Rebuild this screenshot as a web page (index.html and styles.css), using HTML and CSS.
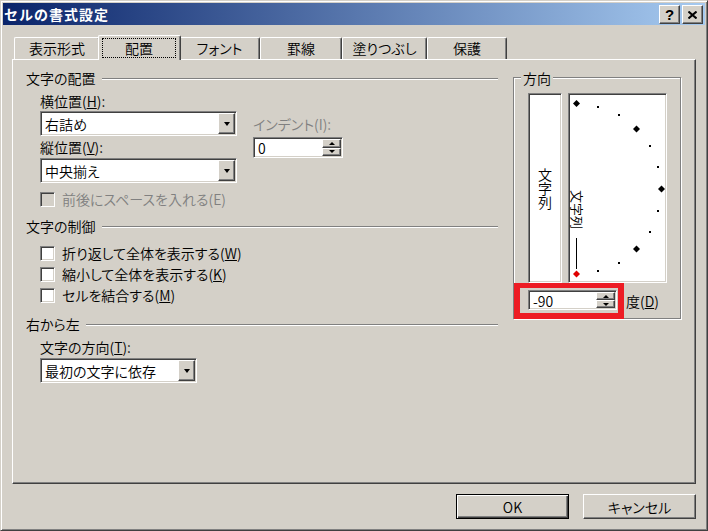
FILE: index.html
```html
<!DOCTYPE html>
<html lang="ja">
<head>
    <meta charset="UTF-8">
    <title>セルの書式設定</title>
    <link rel="stylesheet" href="styles.css">
</head>
<body>

<div class="window">
    <div class="titlebar">
        <span class="title">セルの書式設定</span>
        <span class="cap-btn">?</span>
        <span class="cap-btn">
            <svg width="9" height="8" viewBox="0 0 9 8"><path d="M0.5 0.5L8.5 7.5M8.5 0.5L0.5 7.5" stroke="#000" stroke-width="2"/></svg>
        </span>
    </div>

    <div class="tabs">
        <div class="tab tab-format">表示形式</div>
        <div class="tab active"><span class="focus">配置</span></div>
        <div class="tab tab-font">フォント</div>
        <div class="tab tab-border">罫線</div>
        <div class="tab tab-fill">塗りつぶし</div>
        <div class="tab tab-protect">保護</div>
    </div>

    <div class="panel">
        <div class="left-col">
            <!-- 文字の配置 -->
            <div class="group-head head-align"><span>文字の配置</span><i class="etch"></i></div>
            <div class="align-row">
                <div class="align-col">
                    <div class="label label-h">横位置(<u>H</u>):</div>
                    <div class="combo combo-h">
                        <span class="combo-text">右詰め</span>
                        <span class="drop-btn"><i class="arrow-down"></i></span>
                    </div>
                    <div class="label label-v">縦位置(<u>V</u>):</div>
                    <div class="combo combo-v">
                        <span class="combo-text">中央揃え</span>
                        <span class="drop-btn"><i class="arrow-down"></i></span>
                    </div>
                </div>
                <div class="indent-col">
                    <div class="label disabled">インデント(I):</div>
                    <div class="spin spin-indent">
                        <span class="spin-text">0</span>
                        <span class="spin-btns">
                            <span class="spin-btn"><i class="arrow-up"></i></span>
                            <span class="spin-btn"><i class="arrow-down"></i></span>
                        </span>
                    </div>
                </div>
            </div>
            <div class="check disabled check-space"><span class="box"></span>前後にスペースを入れる(E)</div>

            <!-- 文字の制御 -->
            <div class="group-head head-control"><span>文字の制御</span><i class="etch"></i></div>
            <div class="check check-first"><span class="box"></span>折り返して全体を表示する(<u>W</u>)</div>
            <div class="check check-next"><span class="box"></span>縮小して全体を表示する(<u>K</u>)</div>
            <div class="check check-next"><span class="box"></span>セルを結合する(<u>M</u>)</div>

            <!-- 右から左 -->
            <div class="group-head head-rtl"><span>右から左</span><i class="etch"></i></div>
            <div class="label label-dir">文字の方向(<u>T</u>):</div>
            <div class="combo combo-dir">
                <span class="combo-text">最初の文字に依存</span>
                <span class="drop-btn"><i class="arrow-down"></i></span>
            </div>
        </div>

        <!-- 方向 -->
        <div class="orient">
            <div class="orient-title">方向</div>
            <div class="orient-boxes">
                <div class="text-box"><span>文字列</span></div>
                <div class="dial">
                    <svg width="97" height="188" viewBox="0 0 97 188">
                        <text x="96" y="-3" transform="rotate(90)" font-size="13">文字列</text>
                        <line x1="7.5" y1="144" x2="7.5" y2="175" stroke="#000" stroke-width="1"/>
                        <polygon points="7.5,6 11,9.5 7.5,13 4,9.5" fill="#000"/>
                        <polygon points="67.5,31.5 71,35 67.5,38.5 64,35" fill="#000"/>
                        <polygon points="92.5,91.5 96,95 92.5,98.5 89,95" fill="#000"/>
                        <polygon points="67.5,151.5 71,155 67.5,158.5 64,155" fill="#000"/>
                        <polygon points="7.5,176.5 11,180 7.5,183.5 4,180" fill="#e00000"/>
                        <rect x="28" y="12" width="2" height="2"/>
                        <rect x="49" y="20" width="2" height="2"/>
                        <rect x="80" y="51" width="2" height="2"/>
                        <rect x="88" y="72" width="2" height="2"/>
                        <rect x="88" y="116" width="2" height="2"/>
                        <rect x="80" y="137" width="2" height="2"/>
                        <rect x="49" y="168" width="2" height="2"/>
                        <rect x="28" y="176" width="2" height="2"/>
                    </svg>
                </div>
            </div>
            <div class="degree-row">
                <div class="highlight">
                    <div class="spin spin-degree">
                        <span class="spin-text">-90</span>
                        <span class="spin-btns">
                            <span class="spin-btn"><i class="arrow-up"></i></span>
                            <span class="spin-btn"><i class="arrow-down"></i></span>
                        </span>
                    </div>
                </div>
                <span class="degree-label">度(<u>D</u>)</span>
            </div>
        </div>
    </div>

    <div class="buttons">
        <div class="push default">OK</div>
        <div class="push">キャンセル</div>
    </div>
</div>

</body>
</html>
```

FILE: styles.css
```css
* {
    box-sizing: border-box;
}
body {
    margin: 0;
    background: #d4d0c8;
    font-family: "Noto Sans CJK JP", "Noto Sans", sans-serif;
    font-size: 14px;
    font-weight: 350;
    line-height: 16px;
    color: #000;
    font-feature-settings: "palt";
}
u {
    text-underline-offset: 1px;
}
.window {
    width: 708px;
    height: 531px;
    padding: 2px;
    border: 1px solid;
    border-color: #d4d0c8 #404040 #404040 #d4d0c8;
    box-shadow: inset 1px 1px #fff, inset -1px -1px #808080;
}

/* Title bar */
.titlebar {
    display: flex;
    align-items: center;
    height: 22px;
    padding: 0 2px 0 1px;
    background: linear-gradient(to right, #0a246a, #a6caf0);
}
.title {
    flex: 1;
    color: #fff;
    font-weight: bold;
    letter-spacing: 1px;
    font-feature-settings: normal;
}
.cap-btn {
    display: flex;
    align-items: center;
    justify-content: center;
    width: 21px;
    height: 19px;
    margin: 1px 0 0 2px;
    background: #d4d0c8;
    border: 1px solid;
    border-color: #fff #404040 #404040 #fff;
    box-shadow: inset -1px -1px #808080;
    font: bold 15px "Liberation Sans", sans-serif;
}

/* Tabs */
.tabs {
    display: flex;
    align-items: flex-end;
    height: 24px;
    margin: 10px 9px 0;
    padding-left: 2px;
}
.tab {
    height: 22px;
    border: 1px solid;
    border-bottom: 0;
    border-color: #fff #404040 #404040 #fff;
    border-radius: 2px 2px 0 0;
    box-shadow: inset -1px 0 #808080;
    text-align: center;
    line-height: 20px;
}
.tab-format { width: 86px; }
.tab-font { width: 81px; }
.tab-border { width: 82px; }
.tab-fill { width: 85px; }
.tab-protect { width: 80px; }
.tab.active {
    position: relative;
    z-index: 1;
    width: 83px;
    height: 25px;
    margin: 0 -2px -1px;
    padding-top: 2px;
    background: #d4d0c8;
}
.focus {
    display: block;
    margin: 0 4px 0 3px;
    border: 1px dotted #000;
    line-height: 18px;
}

/* Panel */
.panel {
    display: flex;
    height: 425px;
    margin: 0 9px;
    padding-left: 13px;
    border: 1px solid;
    border-color: #fff #404040 #404040 #fff;
    box-shadow: inset -1px -1px #808080;
}
.left-col {
    width: 472px;
}
.group-head {
    display: flex;
    align-items: center;
    height: 16px;
}
.group-head .etch {
    flex: 1;
    height: 2px;
    margin: 2px 0 0 6px;
    border-top: 1px solid #808080;
    border-bottom: 1px solid #fff;
}
.head-align { margin-top: 10px; }
.head-control { margin-top: 11px; }
.head-rtl { margin-top: 13px; }

.label {
    height: 16px;
}
.disabled {
    color: #808080;
}
.align-row {
    display: flex;
    padding-left: 14px;
}
.align-col {
    width: 197px;
}
.label-h { margin-top: 7px; }
.label-v { margin-top: 3px; }
.indent-col {
    width: 90px;
    margin: 30px 0 0 16px;
}

/* Combo boxes */
.combo {
    display: flex;
    align-items: center;
    width: 197px;
    height: 25px;
    padding: 1px;
    background: #fff;
    border: 1px solid;
    border-color: #808080 #fff #fff #808080;
    box-shadow: inset 1px 1px #404040, inset -1px -1px #d4d0c8;
}
.combo-h { margin-top: 2px; }
.combo-v { margin-top: 3px; }
.combo-text {
    flex: 1;
    padding-left: 3px;
}
.drop-btn {
    display: flex;
    align-items: center;
    justify-content: center;
    width: 17px;
    height: 21px;
    background: #d4d0c8;
    border: 1px solid;
    border-color: #fff #404040 #404040 #fff;
    box-shadow: inset -1px -1px #808080;
}
.arrow-down {
    width: 1px;
    height: 0;
    border-left: 3px solid transparent;
    border-right: 3px solid transparent;
    border-top: 4px solid #000;
}
.arrow-up {
    width: 1px;
    height: 0;
    border-left: 3px solid transparent;
    border-right: 3px solid transparent;
    border-bottom: 4px solid #000;
}

/* Spin boxes */
.spin {
    display: flex;
    height: 21px;
    padding: 1px;
    background: #fff;
    border: 1px solid;
    border-color: #808080 #fff #fff #808080;
    box-shadow: inset 1px 1px #404040, inset -1px -1px #d4d0c8;
}
.spin-indent {
    width: 90px;
    margin-top: 5px;
}
.spin-text {
    flex: 1;
    padding: 1px 0 0 3px;
}
.spin-btns {
    display: flex;
    flex-direction: column;
    width: 19px;
}
.spin-btn {
    display: flex;
    flex: 1;
    align-items: center;
    justify-content: center;
    background: #d4d0c8;
    border: 1px solid;
    border-color: #fff #404040 #404040 #fff;
    box-shadow: inset -1px -1px #808080;
}
.spin-btn .arrow-down,
.spin-btn .arrow-up {
    border-top-width: 3px;
    border-bottom-width: 3px;
}

/* Check boxes */
.check {
    display: flex;
    align-items: center;
    height: 16px;
    padding-left: 14px;
}
.box {
    width: 15px;
    height: 15px;
    margin-right: 7px;
    background: #fff;
    border: 1px solid;
    border-color: #808080 #fff #fff #808080;
    box-shadow: inset 1px 1px #404040, inset -1px -1px #d4d0c8;
}
.check.disabled .box {
    background: #d4d0c8;
}
.check-space { margin-top: 8px; }
.check-first { margin-top: 11px; }
.check-next { margin-top: 5px; }

.label-dir {
    margin-top: 7px;
    padding-left: 14px;
}
.combo-dir {
    width: 157px;
    margin: 3px 0 0 14px;
}

/* Orientation group */
.orient {
    width: 168px;
    height: 242px;
    margin: 17px 0 0 15px;
    border: 1px solid #808080;
    box-shadow: inset 1px 1px #fff, 1px 1px #fff;
}
.orient-title {
    width: fit-content;
    margin: -8px 0 0 7px;
    padding: 0 2px;
    background: #d4d0c8;
}
.orient-boxes {
    display: flex;
    gap: 6px;
    height: 190px;
    margin: 7px 0 0 14px;
}
.text-box,
.dial {
    background: #fff;
    border: 1px solid;
    border-color: #808080 #fff #fff #808080;
    box-shadow: inset 1px 1px #404040, inset -1px -1px #d4d0c8;
}
.text-box {
    display: flex;
    align-items: center;
    justify-content: center;
    width: 34px;
}
.text-box span {
    writing-mode: vertical-rl;
    margin-top: 2px;
}
.dial {
    width: 99px;
}
.dial svg {
    display: block;
}
.degree-row {
    display: flex;
    align-items: center;
}
.highlight {
    border: 6px solid #ed1c24;
    border-top-width: 5px;
    padding: 2px 1px 3px 8px;
}
.spin-degree {
    width: 89px;
    height: 20px;
}
.degree-label {
    margin-left: 2px;
}

/* Buttons */
.buttons {
    display: flex;
    justify-content: flex-end;
    gap: 14px;
    margin-top: 10px;
    padding-right: 9px;
}
.push {
    display: flex;
    align-items: center;
    justify-content: center;
    width: 113px;
    height: 25px;
    border: 1px solid;
    border-color: #fff #404040 #404040 #fff;
    box-shadow: inset -1px -1px #808080;
}
.push.default {
    border-color: #000;
    box-shadow: inset 1px 1px #fff, inset -1px -1px #404040, inset -2px -2px #808080;
}
```
